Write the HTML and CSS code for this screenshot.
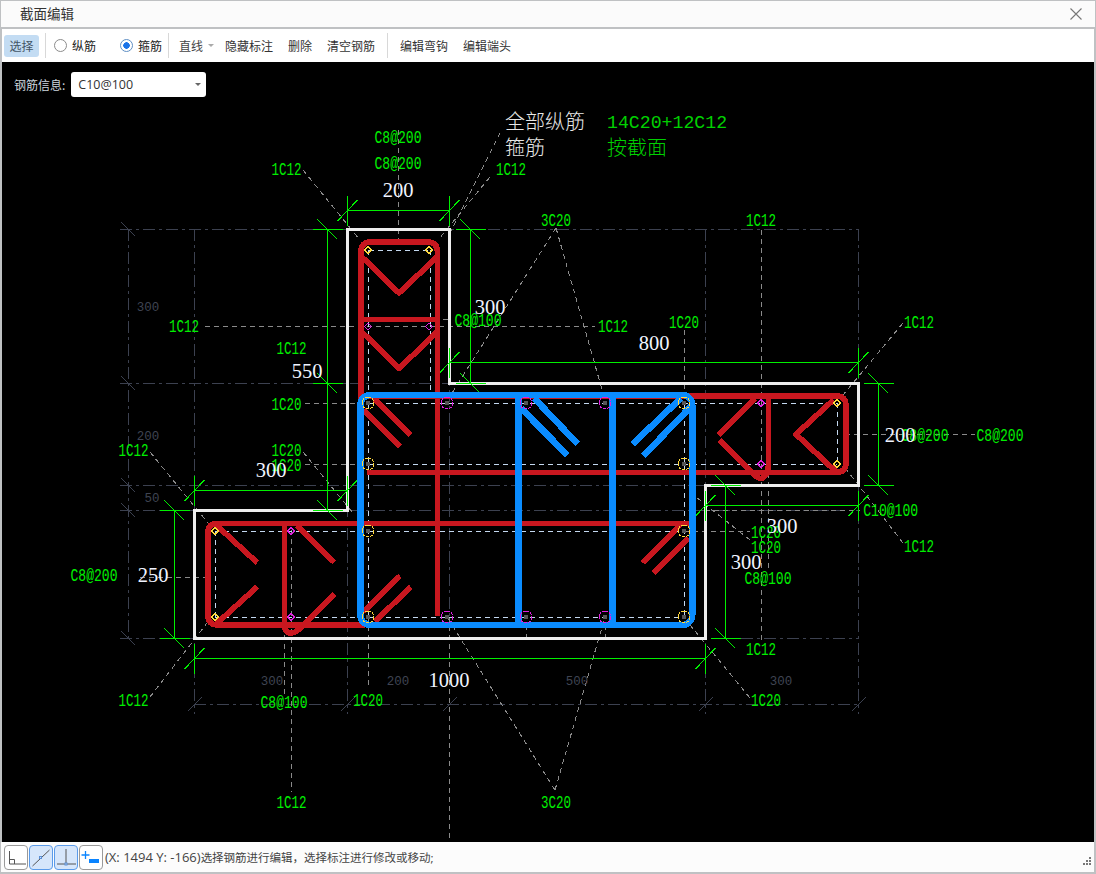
FILE: index.html
```html
<!DOCTYPE html>
<html lang="zh">
<head>
<meta charset="utf-8">
<title>截面编辑</title>
<link rel="stylesheet" href="styles.css">
</head>
<body>
<div class="window">
  <header class="titlebar">
    <span class="title">截面编辑</span>
    <svg class="close" width="12" height="12" viewBox="0 0 12 12"><path d="M.5.5l11 11M11.5.5l-11 11"/></svg>
  </header>
  <nav class="toolbar">
    <span class="tool active">选择</span>
    <i class="sep sep-a"></i>
    <label class="radio r1"><i class="dot"></i>纵筋</label>
    <label class="radio r2"><i class="dot on"></i>箍筋</label>
    <i class="sep sep-b"></i>
    <span class="tool drop">直线<i class="caret"></i></span>
    <span class="tool t-hide">隐藏标注</span>
    <span class="tool t-del">删除</span>
    <span class="tool t-clear">清空钢筋</span>
    <i class="sep sep-c"></i>
    <span class="tool t-hook">编辑弯钩</span>
    <span class="tool t-end">编辑端头</span>
  </nav>
  <main class="canvas">
    <div class="info">
      <span class="info-label">钢筋信息:</span>
      <div class="select">C10@100<i class="caret dark"></i></div>
    </div>
    <svg class="drawing" width="1092" height="780" viewBox="2 62 1092 780">
      <defs>
        <g id="tv"><path d="M0-15V15M-10 10.500L10-10.500"/></g>
        <g id="th"><path d="M-15 0H15M-10-10L10 10"/></g>
        <g id="dh"><path d="M-7 7L7-7"/></g>
        <g id="dv"><path d="M-7-7L7 7"/></g>
        <g id="sy" class="dot-y"><path d="M0-3.500L3.500 0 0 3.500-3.500 0Z"/></g>
        <g id="sm" class="dot-m"><path d="M0-3.500L3.500 0 0 3.500-3.500 0Z"/></g>
        <g id="ly"><circle class="dot-y dash-c" r="6"/><circle class="core" r="2.500"/></g>
        <g id="lm"><circle class="dot-m dash-c" r="6"/><circle class="core" r="2.500"/></g>
      </defs>

      <g class="dim">
        <path d="M120 229.500H858M120 383.500H858M120 485.500H858M120 510.500H858M120 638.500H858M194 704.500H858"/>
        <path d="M128.500 229V638M194.500 229V714M347.500 229V714M449.500 229V620M705.500 229V714M858.500 229V714"/>
        <use href="#dv" x="128.500" y="229.500"/><use href="#dv" x="128.500" y="383.500"/><use href="#dv" x="128.500" y="485.500"/><use href="#dv" x="128.500" y="510.500"/><use href="#dv" x="128.500" y="638.500"/>
        <use href="#dh" x="194.500" y="704.500"/><use href="#dh" x="347.500" y="704.500"/><use href="#dh" x="449.500" y="704.500"/><use href="#dh" x="705.500" y="704.500"/><use href="#dh" x="858.500" y="704.500"/>
      </g>
      <g class="lead">
        <path d="M398.500 130V243M205 326.500H595M305 403.500H365M305 464.500H365M684 531.500H750M845 434.500H975M705 510.500H860M140 577.500H208M398 319.500H450"/>
        <path d="M291.500 530V792M284.500 590V695M368.500 617V686M449.500 617V840M761.500 230V640M684.500 330V403M768.500 437V572M526.500 625V640M605.500 625V640"/>
        <path d="M303 170L360 240M490 177L438 240M500 133L450 233M556 228L452 393M556 228L605 400M903 323L843 395M903 543L843 465M150 452L208 523M150 697L207 623M303 452L353 513M750 540L696 497M750 698L690 625M555 790L447 617M555 790L605 617"/>
      </g>
      <g class="inner">
        <path d="M368.500 250.500H430M368 403.500H837M368 464.500H837M215 531.500H684M215 617.500H684"/>
        <path d="M368.500 250V617M430.500 250V403M684.500 403V617M837.500 403V464M215.500 531V617"/>
      </g>

      <path class="outline" d="M347.500 229.500H449.500V383.500H858.500V485.500H705.500V638.500H194.500V510.500H347.500Z"/>

      <g class="green">
        <path d="M347.500 210.500H449.500M327.500 229V510M470.500 229V383M449 362.500H858.500M878.500 383V485M705.500 505.500H858.500M725.500 485V638M194.500 658.500H705.500M174.500 510V638M194.500 490.500H347.500"/>
        <use href="#tv" x="347.500" y="210.500"/><use href="#tv" x="449.500" y="210.500"/>
        <use href="#th" x="327.500" y="229.500"/><use href="#th" x="327.500" y="383.500"/><use href="#th" x="327.500" y="510.500"/>
        <use href="#th" x="470.500" y="229.500"/><use href="#th" x="470.500" y="383.500"/>
        <use href="#tv" x="449.500" y="362.500"/><use href="#tv" x="858.500" y="362.500"/>
        <use href="#th" x="878.500" y="383.500"/><use href="#th" x="878.500" y="485.500"/>
        <use href="#tv" x="705.500" y="505.500"/><use href="#tv" x="858.500" y="505.500"/>
        <use href="#th" x="725.500" y="485.500"/><use href="#th" x="725.500" y="638.500"/>
        <use href="#tv" x="194.500" y="658.500"/><use href="#tv" x="705.500" y="658.500"/>
        <use href="#th" x="174.500" y="510.500"/><use href="#th" x="174.500" y="638.500"/>
        <use href="#tv" x="194.500" y="490.500"/><use href="#tv" x="347.500" y="490.500"/>
      </g>

      <g class="red">
        <path d="M361 400V252Q361 242 371 242H427Q437.500 242 437.500 252V616"/>
        <path d="M362 257L399 293 437 257M361 319.500H437.500M362 332L399 368.500 437 332"/>
        <path d="M361 396H836Q846 396 846 406V462Q846 472.500 836 472.500H367"/>
        <path d="M690 523.500H217Q208 523.500 208 533V615Q208 625 218 625H365"/>
        <path d="M284.300 523.500V623Q284.300 633 291 633Q295 633 300 628.500L334.300 594M296.700 525.700L334.300 562.300M215 524L257.300 562.700M215 625L257.300 586.700"/>
        <path d="M373.300 397.300L410.700 435M363.300 410L400 446.700M400 576L363.300 611.700M410.700 586.700L375 621.700"/>
        <path d="M680 525L642.700 562.700M688.300 538.300L653.300 573.300"/>
        <path d="M755 398.300L718.300 435M719.300 440L755 475.700Q761 481 765 476Q768.300 473 768.300 466V395M833.300 400L796 434.300 836.700 472.300"/>
      </g>
      <g class="blue">
        <rect x="360.300" y="395" width="332" height="230" rx="10"/>
        <path d="M518.300 395V625M612.700 395V625M534.300 398.300L577.700 444M521 408.300L567.300 455M680.700 398.300L632.700 444M692.300 405L643.300 456"/>
      </g>

      <g>
        <use href="#sy" x="368" y="250"/><use href="#sy" x="429" y="250"/><use href="#sm" x="368" y="326.300"/><use href="#sm" x="429" y="326.300"/>
        <use href="#sy" x="215" y="531"/><use href="#sy" x="215" y="617"/><use href="#sm" x="291" y="531"/><use href="#sm" x="291" y="617"/>
        <use href="#sm" x="761" y="403"/><use href="#sm" x="761" y="464"/><use href="#sy" x="837" y="403"/><use href="#sy" x="837" y="464"/>
        <use href="#ly" x="368" y="403"/><use href="#ly" x="368" y="464"/><use href="#ly" x="368" y="531"/><use href="#ly" x="368" y="617"/>
        <use href="#ly" x="684" y="403"/><use href="#ly" x="684" y="464"/><use href="#ly" x="684" y="531"/><use href="#ly" x="684" y="617"/>
        <use href="#lm" x="447" y="403"/><use href="#lm" x="447" y="617"/><use href="#lm" x="526" y="403"/><use href="#lm" x="526" y="617"/><use href="#lm" x="605" y="403"/><use href="#lm" x="605" y="617"/>
      </g>

      <g class="t-dim">
        <text x="148" y="311">300</text><text x="148" y="440">200</text><text x="152" y="502">50</text>
        <text x="272" y="685">300</text><text x="398" y="685">200</text><text x="577" y="685">500</text><text x="781" y="685">300</text>
      </g>
      <g class="t-green">
        <text x="398" y="143" textLength="47" lengthAdjust="spacingAndGlyphs">C8@200</text>
        <text x="398" y="169" textLength="47" lengthAdjust="spacingAndGlyphs">C8@200</text>
        <text x="286.500" y="175" textLength="30" lengthAdjust="spacingAndGlyphs">1C12</text>
        <text x="511" y="175" textLength="30" lengthAdjust="spacingAndGlyphs">1C12</text>
        <text x="556" y="226" textLength="30" lengthAdjust="spacingAndGlyphs">3C20</text>
        <text x="761" y="226" textLength="30" lengthAdjust="spacingAndGlyphs">1C12</text>
        <text x="919" y="328" textLength="30" lengthAdjust="spacingAndGlyphs">1C12</text>
        <text x="184" y="332" textLength="30" lengthAdjust="spacingAndGlyphs">1C12</text>
        <text x="478" y="326" textLength="47" lengthAdjust="spacingAndGlyphs">C8@100</text>
        <text x="613" y="332" textLength="30" lengthAdjust="spacingAndGlyphs">1C12</text>
        <text x="684" y="328" textLength="30" lengthAdjust="spacingAndGlyphs">1C20</text>
        <text x="291.500" y="354" textLength="30" lengthAdjust="spacingAndGlyphs">1C12</text>
        <text x="286.500" y="410" textLength="30" lengthAdjust="spacingAndGlyphs">1C20</text>
        <text x="286.500" y="456" textLength="30" lengthAdjust="spacingAndGlyphs">1C20</text>
        <text x="286.500" y="471" textLength="30" lengthAdjust="spacingAndGlyphs">1C20</text>
        <text x="133.500" y="456" textLength="30" lengthAdjust="spacingAndGlyphs">1C12</text>
        <text x="925" y="441" textLength="47" lengthAdjust="spacingAndGlyphs">C8@200</text>
        <text x="1000" y="441" textLength="47" lengthAdjust="spacingAndGlyphs">C8@200</text>
        <text x="890.700" y="516" textLength="55" lengthAdjust="spacingAndGlyphs">C10@100</text>
        <text x="919" y="552" textLength="30" lengthAdjust="spacingAndGlyphs">1C12</text>
        <text x="766" y="538" textLength="30" lengthAdjust="spacingAndGlyphs">1C20</text>
        <text x="766" y="553" textLength="30" lengthAdjust="spacingAndGlyphs">1C20</text>
        <text x="768" y="584" textLength="47" lengthAdjust="spacingAndGlyphs">C8@100</text>
        <text x="761" y="655" textLength="30" lengthAdjust="spacingAndGlyphs">1C12</text>
        <text x="94" y="581" textLength="47" lengthAdjust="spacingAndGlyphs">C8@200</text>
        <text x="284" y="708" textLength="47" lengthAdjust="spacingAndGlyphs">C8@100</text>
        <text x="368" y="706" textLength="30" lengthAdjust="spacingAndGlyphs">1C20</text>
        <text x="766" y="706" textLength="30" lengthAdjust="spacingAndGlyphs">1C20</text>
        <text x="291.500" y="808" textLength="30" lengthAdjust="spacingAndGlyphs">1C12</text>
        <text x="556" y="808" textLength="30" lengthAdjust="spacingAndGlyphs">3C20</text>
        <text x="133.500" y="706" textLength="30" lengthAdjust="spacingAndGlyphs">1C12</text>
      </g>
      <g class="t-white">
        <text x="398" y="197">200</text><text x="654" y="350">800</text><text x="307" y="378">550</text>
        <text x="490" y="314">300</text><text x="271" y="477">300</text><text x="900" y="442">200</text>
        <text x="782" y="533">300</text><text x="746" y="569">300</text><text x="153" y="582">250</text><text x="449" y="687">1000</text>
      </g>
      <g class="t-head">
        <text x="505" y="129">全部纵筋</text>
        <text x="505" y="155">箍筋</text>
      </g>
      <g class="t-head green-t">
        <text class="mono" x="607" y="128">14C20+12C12</text>
        <text x="607" y="155">按截面</text>
      </g>
    </svg>
  </main>
  <footer class="statusbar">
    <span class="ico">
      <svg width="24" height="25" viewBox="0 0 24 25"><path class="ln" d="M5.500 6V19H22M5.500 14.500H10.500V19"/></svg>
    </span>
    <span class="ico on">
      <svg width="24" height="25" viewBox="0 0 24 25"><path class="ln" d="M3.500 21L20.500 5"/><rect class="node" x="10.500" y="11.500" width="2" height="2"/></svg>
    </span>
    <span class="ico on">
      <svg width="24" height="25" viewBox="0 0 24 25"><path class="ln" d="M3 19H22M12 4V19"/><rect class="node" x="11" y="18" width="2" height="2"/></svg>
    </span>
    <span class="ico">
      <svg width="24" height="25" viewBox="0 0 24 25"><path class="plus" d="M6.500 6V14M2.500 10H10.500"/><rect class="bar" x="10" y="14" width="10" height="4"/></svg>
    </span>
    <span class="status-text"><span class="coords">(X: 1494 Y: -166)</span>选择钢筋进行编辑，选择标注进行修改或移动;</span>
    <svg class="grip" width="8" height="8" viewBox="0 0 8 8"><path d="M6 0h2v2H6zM3 3h2v2H3zM6 3h2v2H6zM0 6h2v2H0zM3 6h2v2H3zM6 6h2v2H6z"/></svg>
  </footer>
</div>
</body>
</html>
```
FILE: styles.css
```css
* { box-sizing: border-box; }
html, body { margin: 0; height: 100%; }
body {
  background: #bfc1c3;
  font-family: "Noto Sans CJK SC", "Liberation Sans", sans-serif;
  overflow: hidden;
}
.window {
  width: 1096px;
  height: 874px;
  display: flex;
  flex-direction: column;
  padding: 1px 2px 2px;
}
.titlebar {
  height: 26px;
  margin: 0 0 2px -1px;
  width: 1094px;
  background: #fbfbfb;
  display: flex;
  align-items: center;
  justify-content: space-between;
  padding: 0 13px 0 19px;
  flex: none;
}
.title { font-size: 13.500px; color: #333; line-height: 1; }
.close path { stroke: #777; stroke-width: 1.100; fill: none; }
.toolbar {
  height: 33px;
  flex: none;
  background: #fff;
  display: flex;
  align-items: center;
  font-size: 12px;
  color: #333;
  padding-left: 2px;
}
.tool { line-height: 22px; white-space: nowrap; }
.active { background: #c3dcf3; border-radius: 3px; width: 35px; text-align: center; height: 22px; color: #456; }
.sep { width: 1px; height: 25px; background: #d8d8d8; }
.sep-a { margin-left: 6px; }
.sep-b { margin-left: 6px; }
.sep-c { margin-left: 12px; }
.radio { display: flex; align-items: center; gap: 5px; font-size: 12px; white-space: nowrap; color: #222; }
.r1 { margin-left: 8px; }
.r2 { margin-left: 24px; }
.dot {
  width: 13px; height: 13px;
  border: 1px solid #8c8c8c;
  border-radius: 50%;
  background: #fff;
  display: block;
}
.dot.on { border-color: #5f8fc4; background: radial-gradient(circle, #1a73e8 0 3px, #fff 3.500px); }
.drop { margin-left: 10px; width: 46px; display: flex; align-items: center; gap: 5px; color: #444; }
.caret {
  display: block;
  width: 0; height: 0;
  border: 3px solid transparent;
  border-top: 3px solid #aaa;
  border-bottom: 0;
}
.caret.dark { border-top-color: #666; margin-left: auto; }
.t-hide { margin-left: 0; }
.t-del { margin-left: 15px; }
.t-clear { margin-left: 15px; }
.t-hook { margin-left: 12px; }
.t-end { margin-left: 15px; }
.canvas {
  flex: 1;
  background: #000;
  position: relative;
  overflow: hidden;
}
.drawing { display: block; }
.info {
  position: absolute;
  left: 12px;
  top: 10px;
  display: flex;
  align-items: center;
  gap: 6px;
  z-index: 1;
}
.info-label { font-size: 12px; color: #cdd6de; }
.select {
  width: 135px;
  height: 25px;
  background: #fff;
  border-radius: 3px;
  display: flex;
  align-items: center;
  padding: 0 5px 0 7px;
  font-family: "Open Sans", "Liberation Sans", sans-serif;
  font-size: 12.500px;
  color: #333;
}
.statusbar {
  height: 30px;
  flex: none;
  margin-left: -1px;
  background: #fcfcfc;
  display: flex;
  align-items: center;
  gap: 1px;
  padding-left: 3px;
  position: relative;
  font-size: 11.500px;
  color: #444;
}
.ico {
  width: 24px;
  height: 25px;
  border: 1px solid #9a9a9a;
  border-radius: 4px;
  background: #fff;
  display: block;
  flex: none;
}
.ico svg { display: block; margin: -1px; }
.ico.on { border-color: #5b9bea; background: #d6e6fb; }
.ln { stroke: #555; stroke-width: 1; fill: none; }
.node { fill: #cfe0f7; stroke: #5b8fd6; stroke-width: 1; }
.plus { stroke: #0a84ff; stroke-width: 1.300; fill: none; }
.bar { fill: #0a84ff; }
.status-text { margin-left: 1px; white-space: nowrap; font-family: "Open Sans", "Noto Sans CJK SC", sans-serif; }
.coords { font-size: 13px; }
.grip { margin-left: auto; margin-right: 3px; margin-top: 8px; }
.grip path { fill: #777; }

.drawing { shape-rendering: crispEdges; }
.dim { stroke: #3c4150; stroke-width: 1; fill: none; }
.dim > path { stroke-dasharray: 12 4 3 4; }
.lead { stroke: #8a8a8a; stroke-width: 1; fill: none; stroke-dasharray: 5 4; }
.inner { stroke: #c4d8f0; stroke-width: 1; fill: none; stroke-dasharray: 5 4; }
.outline { stroke: #eeeeee; stroke-width: 3; fill: none; }
.green { stroke: #00f000; stroke-width: 1; fill: none; }
.red { stroke: #c8171f; stroke-width: 5.600; fill: none; stroke-linejoin: round; }
.blue { stroke: #0a8cff; stroke-width: 6.500; fill: none; }
.dot-y { stroke: #ffd83c; stroke-width: 1; fill: none; }
.dot-m { stroke: #e020e0; stroke-width: 1; fill: none; }
.dash-c { stroke-dasharray: 3 1; }
.core { fill: #555; stroke: none; }

.t-dim text { font: 12.500px "Liberation Mono", monospace; fill: #3f4452; text-anchor: middle; stroke: none; }
.t-green text { font: 18px "Liberation Mono", monospace; fill: #00ee00; text-anchor: middle; stroke: none; }
.t-white text { font: 20.500px "Liberation Serif", serif; fill: #f0f4ff; text-anchor: middle; }
.t-head text { font: 300 20px "Noto Sans CJK SC", sans-serif; fill: #e8e8e8; }
.green-t text { fill: #00d000; }
.green-t .mono { font: 18.200px "Liberation Mono", monospace; fill: #00d000; }
```
